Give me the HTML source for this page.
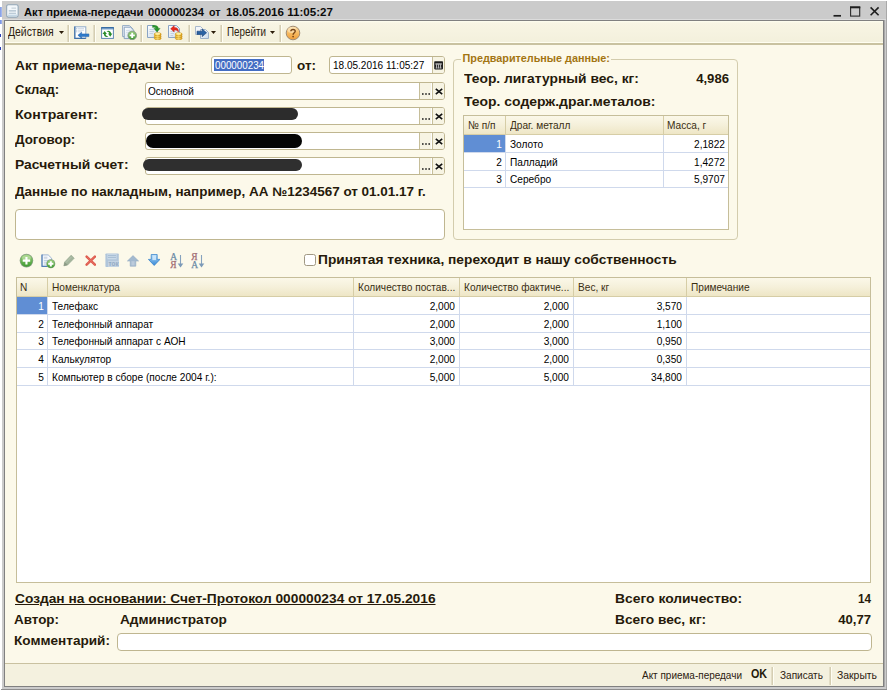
<!DOCTYPE html>
<html lang="ru">
<head>
<meta charset="utf-8">
<title>Акт приема-передачи</title>
<style>
*{box-sizing:border-box;margin:0;padding:0}
html,body{width:887px;height:690px;overflow:hidden;background:#fff}
body{font-family:"Liberation Sans",sans-serif;font-size:11.5px;color:#000;position:relative}
.a{position:absolute}
#frame{position:absolute;left:2px;top:1px;width:885px;height:689px;background:#cbcbcb}
.cap{position:absolute;top:5.6px;transform-origin:0 50%;font-weight:bold;font-size:11.3px;line-height:13px;white-space:nowrap;color:#0c0c0c}
#client{position:absolute;left:5px;top:21px;width:878px;height:665px;background:#fcf9ea}
#tb{position:absolute;left:5px;top:21px;width:878px;height:24px;background:linear-gradient(#fffef0 0,#f8f5e4 2px,#f3f0dc 21px,#fffef0 21.5px,#fffef0 22px,#c9c2a0 22px,#c9c2a0 23.7px,#fffff4 23.7px)}
.tt{position:absolute;white-space:nowrap;font-size:11.7px;line-height:13px;color:#2c2110;transform-origin:0 50%;transform:scaleX(.88)}
.sep{position:absolute;top:24.5px;width:3px;height:17px;background:linear-gradient(90deg,#e9e4cf,#d3ccb0 55%,#fffef4 60%)}
.lbl{position:absolute;font-weight:bold;font-size:12.5px;white-space:nowrap;color:#261a0a;line-height:16px;transform-origin:0 50%}
.lbl.r{text-align:right;transform-origin:100% 50%}
.fld{position:absolute;background:#fff;border:1px solid #bfb690;border-radius:3px;height:18px;overflow:hidden}
.ft{position:absolute;left:3px;top:2px;white-space:nowrap;font-size:11.4px;line-height:13px;transform-origin:0 50%;transform:scaleX(.88)}
.b{position:absolute;top:0;width:12px;height:16px;border-left:1px solid #c6be9a;background:#f7f4e3}
.red{position:absolute;border-radius:8px}
.grp{position:absolute;border:1px solid #d3ccad;border-radius:4px}
.th{position:absolute;white-space:nowrap;font-size:11.5px;line-height:13px;color:#3a2e12;transform-origin:0 50%;transform:scaleX(.88)}
.td{position:absolute;white-space:nowrap;font-size:11.5px;color:#000;transform-origin:0 50%;transform:scaleX(.88);line-height:14px}
.tr{position:absolute;white-space:nowrap;font-size:11.5px;color:#000;transform-origin:100% 50%;transform:scaleX(.88);text-align:right;line-height:14px}
.hl{position:absolute;height:1px;background:#cfd9ec}
.vl{position:absolute;width:1px;background:#cfd9ec}
.hd{position:absolute;background:linear-gradient(#fbf8e9,#f5f0da 50%,#eee6c6);border-bottom:1px solid #d6cda6}
.hv{position:absolute;width:1px;background:#d6cda6}
.sel{position:absolute;background:#608ed4}
</style>
</head>
<body>

<div id="frame"></div>
<div class="a" style="left:0;top:6.5px;width:1.5px;height:10px;background:linear-gradient(90deg,#7f9ae6,#aebff0)"></div>
<div class="a" style="left:0;top:19.5px;width:1.5px;height:4.5px;background:linear-gradient(90deg,#6f8ce2,#a9baee)"></div>
<div class="a" style="left:0;top:33.5px;width:1.4px;height:3px;background:#2a3fb4"></div>
<div class="a" style="left:0;top:46.5px;width:1.4px;height:3px;background:#2a3fb4"></div>
<div class="a" style="left:2px;top:19px;width:885px;height:1px;background:#dcdcdc"></div>
<div class="a" style="left:4px;top:20px;width:880px;height:667px;background:#808080"></div>
<div class="a" style="left:884px;top:20px;width:1px;height:667px;background:#a8a8a8"></div>
<div class="a" style="left:886px;top:1px;width:1px;height:689px;background:#a9a9a9"></div>
<div class="a" style="left:1px;top:689px;width:886px;height:1px;background:#8e8e8e"></div>
<div id="client"></div>
<svg class="a" style="left:6px;top:4.1px" width="12.8" height="13.8" viewBox="0 0 14 15"><rect x=".7" y=".7" width="12.6" height="13.6" rx="2" fill="#f4f8fb" stroke="#93a7b8" stroke-width="1.2"/><path d="M6 4.5H11" stroke="#c9d3dc" stroke-width="1.4"/><path d="M3 7.5H11M3 10H11" stroke="#a9bccb" stroke-width="1.2"/><rect x="2" y="11.5" width="10" height="2" fill="#c5d8e6"/></svg>
<div class="cap" style="left:24.4px;transform:scaleX(0.99)">Акт приема-передачи</div>
<div class="cap" style="left:148px;transform:scaleX(0.99)">000000234</div>
<div class="cap" style="left:209px;transform:scaleX(0.946)">от</div>
<div class="cap" style="left:225.6px;transform:scaleX(1.025)">18.05.2016 11:05:27</div>
<svg class="a" style="left:830px;top:4px" width="54" height="14" viewBox="0 0 54 14"><path d="M3.5 11.8H11" stroke="#1e1e1e" stroke-width="1.7"/><rect x="20.6" y="3.4" width="9.1" height="8.7" fill="none" stroke="#2a2a2a" stroke-width="1.1"/><path d="M20 3.3H30.3" stroke="#1e1e1e" stroke-width="2"/><path d="M40.6 3.4L48.6 11.2M48.6 3.4L40.6 11.2" stroke="#1e1e1e" stroke-width="1.6"/></svg>
<div id="tb"></div>
<svg width="0" height="0" style="position:absolute"><defs>
<linearGradient id="gG" x1="0" y1="0" x2="0" y2="1"><stop offset="0" stop-color="#9ad07a"/><stop offset="1" stop-color="#3f9a32"/></linearGradient>
<linearGradient id="gO" x1="0" y1="0" x2="0" y2="1"><stop offset="0" stop-color="#fbdca6"/><stop offset=".5" stop-color="#f7bb62"/><stop offset="1" stop-color="#ee9c38"/></linearGradient>
<linearGradient id="gD" x1="0" y1="0" x2="1" y2="1"><stop offset="0" stop-color="#ffffff"/><stop offset="1" stop-color="#c9d9ea"/></linearGradient>
<linearGradient id="gC" x1="0" y1="0" x2="1" y2="0"><stop offset="0" stop-color="#e9b520"/><stop offset=".5" stop-color="#fbe27a"/><stop offset="1" stop-color="#d99a10"/></linearGradient>
<linearGradient id="gB" x1="0" y1="0" x2="0" y2="1"><stop offset="0" stop-color="#a9d6f7"/><stop offset="1" stop-color="#3a8ad6"/></linearGradient>
</defs></svg>
<div class="tt" style="left:8.4px;top:26.4px;font-size:12px;transform:scaleX(.868)">Действия</div>
<div class="tt" style="left:227.4px;top:26.4px;font-size:12px;transform:scaleX(.818)">Перейти</div>
<svg class="a" style="left:58.5px;top:31.4px" width="5" height="3" viewBox="0 0 5 3"><path d="M0 0H5L2.5 3Z" fill="#2b1d0a"/></svg>
<svg class="a" style="left:211px;top:31.4px" width="5" height="3" viewBox="0 0 5 3"><path d="M0 0H5L2.5 3Z" fill="#2b1d0a"/></svg>
<svg class="a" style="left:270px;top:31.4px" width="5" height="3" viewBox="0 0 5 3"><path d="M0 0H5L2.5 3Z" fill="#2b1d0a"/></svg>
<div class="sep" style="left:67px"></div>
<div class="sep" style="left:93px"></div>
<div class="sep" style="left:140px"></div>
<div class="sep" style="left:187.6px"></div>
<div class="sep" style="left:219.8px"></div>
<div class="sep" style="left:279px"></div>
<svg class="a" style="left:74px;top:26px" width="16" height="14" viewBox="0 0 16 14"><rect x=".8" y=".8" width="11" height="11.6" fill="#fdfeff" stroke="#8fabc9" stroke-width="1"/><path d="M.8 .4V12.4H11.8" fill="none" stroke="#3f70a8" stroke-width="1.2"/><path d="M3.6 2.6H10M3.6 4.2H10M3.6 5.8H8" stroke="#c1cedd" stroke-width=".8"/><path d="M2 2.6H2.8M2 4.2H2.8M2 5.8H2.8" stroke="#8fa9c6" stroke-width=".8"/><path d="M3.9 9.2L7.6 6.3V7.9H14.9V10.6H7.6V12.2Z" fill="#2d7acb" stroke="#1f5fa8" stroke-width=".5"/></svg>
<svg class="a" style="left:101px;top:26.6px" width="13" height="12" viewBox="0 0 13 12"><rect x=".6" y=".6" width="11.8" height="10.8" fill="#fff" stroke="#5f87b2" stroke-width="1"/><rect x=".3" y=".2" width="12.4" height="1.5" fill="#2c64a0"/><rect x="1" y="1.7" width="11" height=".9" fill="#8fb3d8"/><path d="M1.5 7L3.7 3.9L5.9 7H4.6C4.8 8.6 6 9.3 7.4 9.2C6.2 10.4 3 10.2 2.8 7Z" fill="#2b8c2b"/><path d="M11.4 6.6L9.2 9.7L7 6.6H8.3C8.1 5 6.9 4.3 5.5 4.4C6.7 3.2 9.9 3.4 10.1 6.6Z" fill="#2b8c2b"/></svg>
<svg class="a" style="left:121.6px;top:24.8px" width="16" height="15" viewBox="0 0 16 15"><path d="M.6 .6H7.4L10.6 3.6V11.6H.6Z" fill="#f4f7fb" stroke="#8aa3c0" stroke-width=".9"/><path d="M2.2 2.2H8.6L11.8 5.2V13.6H2.2Z" fill="url(#gD)" stroke="#7d98b8" stroke-width=".9"/><path d="M4 5.5H8M4 7.5H7" stroke="#cfdae8" stroke-width=".8"/><circle cx="10.2" cy="10.4" r="4.3" fill="url(#gG)" stroke="#87998a" stroke-width=".9"/><path d="M10.2 7.8V13M7.6 10.4H12.8" stroke="#fff" stroke-width="1.9"/></svg>
<svg class="a" style="left:147px;top:25px" width="15" height="15" viewBox="0 0 15 15"><path d="M.5 .5H7.5L10.5 3.5V12.5H.5Z" fill="url(#gD)" stroke="#8aa4c4"/><path d="M2.5 4.5H7M2.5 6.5H7M2.5 8.5H6" stroke="#c3d0e0" stroke-width="1"/><path d="M5.6 .3C8.6 .1 11.4 .9 11.4 3.4H13.1L10 6.9L6.9 3.4H8.7C8.7 2.4 7.4 2 5.6 2.4Z" fill="#2a962a" stroke="#1c761c" stroke-width=".4"/><g transform="translate(7.2,7.2)"><ellipse cx="3.5" cy="6" rx="3.5" ry="1.6" fill="url(#gC)" stroke="#c58a12" stroke-width=".5"/><ellipse cx="3.5" cy="4" rx="3.5" ry="1.6" fill="url(#gC)" stroke="#c58a12" stroke-width=".5"/><ellipse cx="3.5" cy="2" rx="3.5" ry="1.6" fill="url(#gC)" stroke="#c58a12" stroke-width=".5"/><ellipse cx="3.5" cy="1.6" rx="2.6" ry="1" fill="#fdeea0"/></g></svg>
<svg class="a" style="left:168px;top:25px" width="15" height="15" viewBox="0 0 15 15"><path d="M.5 .5H8.5L11.5 3.5V12.5H.5Z" fill="url(#gD)" stroke="#8aa4c4"/><path d="M2.5 6.5H6M2.5 8.5H6M2.5 10.5H5" stroke="#c3d0e0" stroke-width="1"/><path d="M2.6 3.8L6.2 .6V2.6C9.2 2.4 10.8 4.2 10.4 7.2C9.8 5.6 8.6 4.8 6.2 5V7Z" fill="#e8291c" stroke="#b81a10" stroke-width=".4"/><g transform="translate(7.2,7.2)"><ellipse cx="3.5" cy="6" rx="3.5" ry="1.6" fill="url(#gC)" stroke="#c58a12" stroke-width=".5"/><ellipse cx="3.5" cy="4" rx="3.5" ry="1.6" fill="url(#gC)" stroke="#c58a12" stroke-width=".5"/><ellipse cx="3.5" cy="2" rx="3.5" ry="1.6" fill="url(#gC)" stroke="#c58a12" stroke-width=".5"/><ellipse cx="3.5" cy="1.6" rx="2.6" ry="1" fill="#fdeea0"/></g></svg>
<svg class="a" style="left:195px;top:26px" width="14" height="13" viewBox="0 0 14 13"><path d="M.5 .5H5.5L7.5 2.5V8.5H.5Z" fill="#f3f6fa" stroke="#a9b9cc"/><path d="M5.5 3.5H10.5L13.5 6.5V12.5H5.5Z" fill="url(#gD)" stroke="#9db0c8"/><path d="M2 5.2H7.2V3L11.6 6.8L7.2 10.6V8.4H2Z" fill="#2a62a4" stroke="#173f73" stroke-width=".6"/></svg>
<svg class="a" style="left:285px;top:24.5px" width="16" height="16" viewBox="0 0 16 16"><circle cx="8" cy="8" r="6.8" fill="url(#gO)" stroke="#a08c74" stroke-width="1"/><ellipse cx="7" cy="5" rx="4.4" ry="3" fill="#fdeccb" opacity=".55"/><path d="M5.9 6.3C5.9 3.8 10.2 3.8 10.2 6.2C10.2 7.7 8.1 7.8 8.1 9.7" fill="none" stroke="#7a4616" stroke-width="1.45"/><circle cx="8.1" cy="11.6" r=".9" fill="#7a4616"/></svg>
<div class="lbl" style="left:15px;top:57.5px;transform:scaleX(1.099);">Акт приема-передачи №:</div>
<div class="fld" style="left:211px;top:56px;width:81px"><div class="a" style="left:2px;top:2.2px;width:50px;height:11.6px;background:#446dc3"></div><div class="ft" style="color:#fff;transform:scaleX(.86)">000000234</div></div>
<div class="lbl" style="left:297px;top:57.5px;transform:scaleX(1.08);">от:</div>
<div class="fld" style="left:329px;top:56px;width:116px"><div class="ft">18.05.2016 11:05:27</div><div class="b" style="left:102px;width:13px"><svg class="a" style="left:1.2px;top:4px" width="9.2" height="8.6" viewBox="0 0 9.2 8.6"><rect x=".2" y=".2" width="8.8" height="8.2" rx=".8" fill="#1e1e1e"/><path d="M1.4 3H7.8" stroke="#f4f4f4" stroke-width="1"/><path d="M2.6 3.4V7.4M4.6 3.4V7.4M6.6 3.4V7.4" stroke="#e8e8e8" stroke-width=".8"/><path d="M1.4 7H7.8" stroke="#bbb" stroke-width=".6"/></svg></div></div>
<div class="lbl" style="left:15px;top:82.4px;transform:scaleX(1.04);">Склад:</div>
<div class="fld" style="left:145px;top:82px;width:300px"><div class="ft" style="left:2px">Основной</div><div class="b" style="left:273px"><svg class="a" style="left:2px;top:9.5px" width="8" height="2" viewBox="0 0 8 2"><path d="M0 1H1.6M3.2 1H4.8M6.4 1H8" stroke="#1a1a1a" stroke-width="1.5"/></svg></div><div class="b" style="left:286px"><svg class="a" style="left:1.5px;top:5px" width="8" height="7" viewBox="0 0 8 7"><path d="M.8 .8L7.2 6.2M7.2 .8L.8 6.2" stroke="#111" stroke-width="1.65"/></svg></div></div>
<div class="lbl" style="left:15px;top:107.1px;transform:scaleX(1.13);">Контрагент:</div>
<div class="fld" style="left:145px;top:107px;width:300px"><div class="ft" style="left:2px"></div><div class="b" style="left:273px"><svg class="a" style="left:2px;top:9.5px" width="8" height="2" viewBox="0 0 8 2"><path d="M0 1H1.6M3.2 1H4.8M6.4 1H8" stroke="#1a1a1a" stroke-width="1.5"/></svg></div><div class="b" style="left:286px"><svg class="a" style="left:1.5px;top:5px" width="8" height="7" viewBox="0 0 8 7"><path d="M.8 .8L7.2 6.2M7.2 .8L.8 6.2" stroke="#111" stroke-width="1.65"/></svg></div></div>
<div class="lbl" style="left:15px;top:132.4px;transform:scaleX(1.07);">Договор:</div>
<div class="fld" style="left:145px;top:132px;width:300px"><div class="ft" style="left:2px"></div><div class="b" style="left:273px"><svg class="a" style="left:2px;top:9.5px" width="8" height="2" viewBox="0 0 8 2"><path d="M0 1H1.6M3.2 1H4.8M6.4 1H8" stroke="#1a1a1a" stroke-width="1.5"/></svg></div><div class="b" style="left:286px"><svg class="a" style="left:1.5px;top:5px" width="8" height="7" viewBox="0 0 8 7"><path d="M.8 .8L7.2 6.2M7.2 .8L.8 6.2" stroke="#111" stroke-width="1.65"/></svg></div></div>
<div class="lbl" style="left:15px;top:157.2px;transform:scaleX(1.11);">Расчетный счет:</div>
<div class="fld" style="left:145px;top:157px;width:300px"><div class="ft" style="left:2px"></div><div class="b" style="left:273px"><svg class="a" style="left:2px;top:9.5px" width="8" height="2" viewBox="0 0 8 2"><path d="M0 1H1.6M3.2 1H4.8M6.4 1H8" stroke="#1a1a1a" stroke-width="1.5"/></svg></div><div class="b" style="left:286px"><svg class="a" style="left:1.5px;top:5px" width="8" height="7" viewBox="0 0 8 7"><path d="M.8 .8L7.2 6.2M7.2 .8L.8 6.2" stroke="#111" stroke-width="1.65"/></svg></div></div>
<div class="red" style="left:142.1px;top:108.1px;width:156.2px;height:12.2px;background:#2c2c2c"></div>
<div class="red" style="left:145.5px;top:133.5px;width:156.2px;height:14.2px;background:#050505"></div>
<div class="red" style="left:143.1px;top:158.7px;width:159.2px;height:12px;background:#2f2f2f"></div>
<div class="lbl" style="left:15px;top:183.7px;transform:scaleX(1.078);">Данные по накладным, например, АА №1234567 от 01.01.17 г.</div>
<div class="fld" style="left:15px;top:209px;width:430px;height:30.5px;border-radius:4px"></div>
<div class="grp" style="left:453px;top:59px;width:285px;height:181px"></div>
<div class="a" style="left:461px;top:51.9px;padding:0 1.6px;background:#fcf9ea;white-space:nowrap;font-weight:bold;font-size:10.8px;line-height:13px;color:#a37512">Предварительные данные:</div>
<div class="lbl" style="left:464px;top:70.6px;transform:scaleX(1.107);">Теор. лигатурный вес, кг:</div>
<div class="lbl r" style="left:529px;width:200px;top:70.6px;transform:scaleX(1.05);">4,986</div>
<div class="lbl" style="left:464px;top:94.3px;transform:scaleX(1.115);">Теор. содерж.драг.металов:</div>
<div class="a" style="left:463px;top:115px;width:266px;height:115px;background:#fff;border:1px solid #c6be9a"></div>
<div class="hd" style="left:464px;top:116px;width:264px;height:18.5px"></div>
<div class="hv" style="left:505px;top:116px;height:18px"></div>
<div class="vl" style="left:505px;top:135px;height:52px"></div>
<div class="hv" style="left:663px;top:116px;height:18px"></div>
<div class="vl" style="left:663px;top:135px;height:52px"></div>
<div class="th" style="left:468px;top:118.5px">№ п/п</div>
<div class="th" style="left:510px;top:118.5px">Драг. металл</div>
<div class="th" style="left:667px;top:118.5px">Масса, г</div>
<div class="sel" style="left:464px;top:135px;width:41px;height:17px"></div>
<div class="hl" style="left:464px;top:152px;width:264px"></div>
<div class="hl" style="left:464px;top:169.5px;width:264px"></div>
<div class="hl" style="left:464px;top:187px;width:264px"></div>
<div class="tr" style="left:464px;top:137.0px;width:38px;color:#fff">1</div>
<div class="td" style="left:510px;top:137.0px">Золото</div>
<div class="tr" style="left:664px;top:137.0px;width:61px">2,1822</div>
<div class="tr" style="left:464px;top:154.5px;width:38px;">2</div>
<div class="td" style="left:510px;top:154.5px">Палладий</div>
<div class="tr" style="left:664px;top:154.5px;width:61px">1,4272</div>
<div class="tr" style="left:464px;top:172.0px;width:38px;">3</div>
<div class="td" style="left:510px;top:172.0px">Серебро</div>
<div class="tr" style="left:664px;top:172.0px;width:61px">5,9707</div>
<svg class="a" style="left:19.2px;top:252.6px" width="15" height="16" viewBox="0 0 15 16"><circle cx="7.45" cy="7.6" r="6.8" fill="#8aa088"/><circle cx="7.45" cy="7.6" r="6.1" fill="url(#gG)"/><ellipse cx="7.45" cy="4.8" rx="4.4" ry="2.6" fill="#cdeab8" opacity=".55"/><path d="M7.45 3.9V11.4M3.7 7.65H11.2" stroke="#fff" stroke-width="2.1"/></svg>
<svg class="a" style="left:41px;top:253.6px" width="15" height="15" viewBox="0 0 15 15"><path d="M1 .9H7.2L10.6 4.2V12.4H1Z" fill="#f6f9fc" stroke="#93add0" stroke-width=".9"/><path d="M1 .5V12.4H10.8" fill="none" stroke="#4f7db6" stroke-width="1.1"/><rect x="2.8" y="2.6" width="3.6" height="2.2" fill="#cfd8e4"/><path d="M2.8 6.4H8M2.8 8.2H6M2.8 10H5.4" stroke="#b4c6dc" stroke-width=".9"/><circle cx="9.8" cy="9.8" r="4.5" fill="#86a084"/><circle cx="9.8" cy="9.8" r="3.9" fill="url(#gG)"/><path d="M9.8 7.2V12.4M7.2 9.8H12.4" stroke="#fff" stroke-width="2"/></svg>
<svg class="a" style="left:63px;top:254px" width="12" height="13" viewBox="0 0 12 13"><path d="M.8 11.9L1.6 8L8.2 1.1L11.3 4.2L4.7 11Z" fill="#a3b49c" stroke="#97a890" stroke-width=".5"/><path d="M.8 11.9L1.6 8L4.7 11Z" fill="#8c9a86"/><path d="M3 8.6L8.6 2.8" stroke="#b9c7b2" stroke-width=".9"/></svg>
<svg class="a" style="left:84.8px;top:255px" width="11.5" height="11.2" viewBox="0 0 11.5 11.2"><path d="M1.6 1.6L9.9 9.7M9.9 1.6L1.6 9.7" stroke="#dd5648" stroke-width="2.4" stroke-linecap="round"/><path d="M2 1.8L9.6 9.3M9.6 1.8L2 9.3" stroke="#ea7a70" stroke-width=".8" stroke-linecap="round"/></svg>
<svg class="a" style="left:104.6px;top:252.6px" width="14.4" height="14.4" viewBox="0 0 14.4 14.4"><rect x=".4" y=".4" width="13.4" height="13.6" rx=".8" fill="#b0c5da"/><rect x="2.4" y=".9" width="9.2" height="5.4" fill="#c9d9e8"/><path d="M3 2.4H11M3 4.4H11" stroke="#a6bcd3" stroke-width="1"/><rect x="3" y="7.8" width="11" height="6.2" fill="#c3d3e3"/><text x="3.6" y="13.4" font-family="Liberation Sans" font-size="6.6" font-weight="bold" fill="#94abc4" textLength="10" lengthAdjust="spacingAndGlyphs">ток</text></svg>
<svg class="a" style="left:127px;top:254.5px" width="12" height="12" viewBox="0 0 12 12"><path d="M6 .6L11.6 6H8.8V11.2H3.2V6H.4Z" fill="#a3b9cf" stroke="#94abc3" stroke-width=".6"/><rect x="4.4" y="6.2" width="3.2" height="4.2" fill="#bccbdb"/></svg>
<svg class="a" style="left:148px;top:254.2px" width="12.4" height="12" viewBox="0 0 12.4 12"><path d="M3.2 .5H9.2V5.4H12L6.2 11.5L.4 5.4H3.2Z" fill="url(#gB)" stroke="#2f7cc8" stroke-width=".7"/><rect x="4.4" y="1.3" width="3.6" height="4.8" fill="#d4eafb" opacity=".85"/></svg>
<svg class="a" style="left:169.6px;top:252.5px" width="14" height="16" viewBox="0 0 14 16"><text x=".2" y="7.4" font-family="Liberation Serif" font-size="9.4" fill="#6a8aa6" stroke="#6a8aa6" stroke-width=".25">А</text><text x=".2" y="15.1" font-family="Liberation Serif" font-size="9.4" fill="#a06a72" stroke="#a06a72" stroke-width=".25">Я</text><path d="M10.5 2V12" stroke="#86a2be" stroke-width="1.1"/><path d="M7.7 10.4H13.3L10.5 14.6Z" fill="#7c9ab8"/></svg>
<svg class="a" style="left:191.2px;top:252.5px" width="14" height="16" viewBox="0 0 14 16"><text x=".2" y="7.4" font-family="Liberation Serif" font-size="9.4" fill="#a06a72" stroke="#a06a72" stroke-width=".25">Я</text><text x=".2" y="15.1" font-family="Liberation Serif" font-size="9.4" fill="#6a8aa6" stroke="#6a8aa6" stroke-width=".25">А</text><path d="M10.5 2V12" stroke="#86a2be" stroke-width="1.1"/><path d="M7.7 10.4H13.3L10.5 14.6Z" fill="#7c9ab8"/></svg>
<div class="a" style="left:303.6px;top:253.8px;width:12px;height:12px;background:#fff;border:1px solid #a09883;border-radius:2.5px"></div>
<div class="lbl" style="left:317.9px;top:251.7px;transform:scaleX(1.1);">Принятая техника, переходит в нашу собственность</div>
<div class="a" style="left:16px;top:277px;width:855px;height:306px;background:#fff;border:1px solid #c6be9a"></div>
<div class="hd" style="left:17px;top:278px;width:853px;height:19px"></div>
<div class="hv" style="left:47px;top:278px;height:18px"></div>
<div class="vl" style="left:47px;top:297px;height:88px"></div>
<div class="hv" style="left:353px;top:278px;height:18px"></div>
<div class="vl" style="left:353px;top:297px;height:88px"></div>
<div class="hv" style="left:459px;top:278px;height:18px"></div>
<div class="vl" style="left:459px;top:297px;height:88px"></div>
<div class="hv" style="left:573px;top:278px;height:18px"></div>
<div class="vl" style="left:573px;top:297px;height:88px"></div>
<div class="hv" style="left:686px;top:278px;height:18px"></div>
<div class="vl" style="left:686px;top:297px;height:88px"></div>
<div class="th" style="left:20.3px;top:281px">N</div>
<div class="th" style="left:52px;top:281px">Номенклатура</div>
<div class="th" style="left:358px;top:281px">Количество постав...</div>
<div class="th" style="left:464px;top:281px">Количество фактиче...</div>
<div class="th" style="left:578px;top:281px">Вес, кг</div>
<div class="th" style="left:691px;top:281px">Примечание</div>
<div class="sel" style="left:17px;top:297px;width:30px;height:17px"></div>
<div class="hl" style="left:17px;top:314.0px;width:853px"></div>
<div class="tr" style="left:16px;top:299.0px;width:28px;color:#fff">1</div>
<div class="td" style="left:52px;top:299.0px">Телефакс</div>
<div class="tr" style="left:354px;top:299.0px;width:101px">2,000</div>
<div class="tr" style="left:460px;top:299.0px;width:109px">2,000</div>
<div class="tr" style="left:574px;top:299.0px;width:108px">3,570</div>
<div class="hl" style="left:17px;top:331.6px;width:853px"></div>
<div class="tr" style="left:16px;top:316.6px;width:28px;">2</div>
<div class="td" style="left:52px;top:316.6px">Телефонный аппарат</div>
<div class="tr" style="left:354px;top:316.6px;width:101px">2,000</div>
<div class="tr" style="left:460px;top:316.6px;width:109px">2,000</div>
<div class="tr" style="left:574px;top:316.6px;width:108px">1,100</div>
<div class="hl" style="left:17px;top:349.3px;width:853px"></div>
<div class="tr" style="left:16px;top:334.3px;width:28px;">3</div>
<div class="td" style="left:52px;top:334.3px">Телефонный аппарат с АОН</div>
<div class="tr" style="left:354px;top:334.3px;width:101px">3,000</div>
<div class="tr" style="left:460px;top:334.3px;width:109px">3,000</div>
<div class="tr" style="left:574px;top:334.3px;width:108px">0,950</div>
<div class="hl" style="left:17px;top:366.9px;width:853px"></div>
<div class="tr" style="left:16px;top:351.9px;width:28px;">4</div>
<div class="td" style="left:52px;top:351.9px">Калькулятор</div>
<div class="tr" style="left:354px;top:351.9px;width:101px">2,000</div>
<div class="tr" style="left:460px;top:351.9px;width:109px">2,000</div>
<div class="tr" style="left:574px;top:351.9px;width:108px">0,350</div>
<div class="hl" style="left:17px;top:384.6px;width:853px"></div>
<div class="tr" style="left:16px;top:369.6px;width:28px;">5</div>
<div class="td" style="left:52px;top:369.6px">Компьютер в сборе (после 2004 г.):</div>
<div class="tr" style="left:354px;top:369.6px;width:101px">5,000</div>
<div class="tr" style="left:460px;top:369.6px;width:109px">5,000</div>
<div class="tr" style="left:574px;top:369.6px;width:108px">34,800</div>
<div class="lbl" style="left:15px;top:591.1px;transform:scaleX(1.1);text-decoration:underline;text-underline-offset:1px">Создан на основании: Счет-Протокол 000000234 от 17.05.2016</div>
<div class="lbl" style="left:14.3px;top:612.4px;transform:scaleX(1.074);">Автор:</div>
<div class="lbl" style="left:120px;top:612.4px;transform:scaleX(1.09);">Администратор</div>
<div class="lbl" style="left:14.3px;top:633.3px;transform:scaleX(1.086);">Комментарий:</div>
<div class="fld" style="left:117px;top:633px;width:754.5px;height:18px;border-radius:4px"></div>
<div class="lbl" style="left:614.6px;top:591.3px;transform:scaleX(1.11);">Всего количество:</div>
<div class="lbl r" style="left:670.5px;width:200px;top:591.3px;transform:scaleX(0.94);">14</div>
<div class="lbl" style="left:614.6px;top:612.1px;transform:scaleX(1.1);">Всего вес, кг:</div>
<div class="lbl r" style="left:670.5px;width:200px;top:612.1px;transform:scaleX(1.05);">40,77</div>
<div class="a" style="left:5px;top:663px;width:878px;height:23px;background:#f4f1df;border-top:1px solid #c9c1a0"></div>
<div class="tt" style="left:641.6px;top:668px;transform:scaleX(0.853);">Акт приема-передачи</div>
<div class="tt" style="left:751.1px;top:668px;transform:scaleX(0.896);font-weight:bold;font-size:12px;color:#241a0a">OK</div>
<div class="tt" style="left:779.8px;top:668px;transform:scaleX(0.859);">Записать</div>
<div class="tt" style="left:837.2px;top:668px;transform:scaleX(0.889);">Закрыть</div>
<div class="sep" style="left:771.3px;top:666.5px;height:18px"></div>
<div class="sep" style="left:829px;top:666.5px;height:18px"></div>
</body>
</html>
